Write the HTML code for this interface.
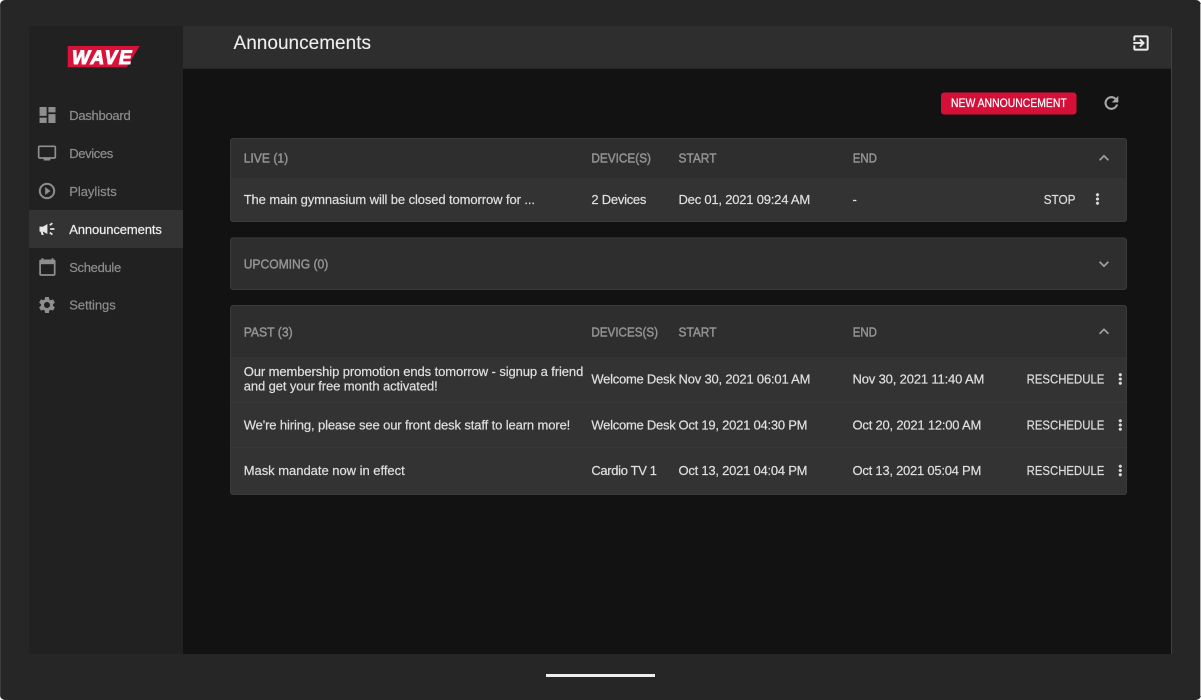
<!DOCTYPE html>
<html><head><meta charset="utf-8"><title>Announcements</title>
<style>
html,body{margin:0;padding:0;background:#fff;width:1201px;height:700px;overflow:hidden}
svg{display:block}
text{font-family:"Liberation Sans",sans-serif;font-size:13px;white-space:pre}
.n{fill:#8d8d8d;stroke:#8d8d8d;stroke-width:.2}
.h{fill:#939393;stroke:#939393;stroke-width:.45;font-size:13px}
.b{fill:#e0e0e0;stroke:#e0e0e0;stroke-width:.18}
.c{fill:#dcdcdc;stroke:#dcdcdc;stroke-width:.22;font-size:13px}
.i{fill:#8f8f8f}
.p{fill:none;stroke:#3a3a3a;stroke-width:1}
.d{fill:#dedede;stroke:#dedede;stroke-width:.6}
</style></head><body>
<svg width="1201" height="700" viewBox="0 0 1201 700" xmlns="http://www.w3.org/2000/svg">
<rect x="0" y="0" width="1201" height="700" rx="5" fill="#262626"/>
<rect x="0" y="4" width="1" height="692" fill="#3c3c3c"/>
<rect x="1200" y="4" width="1" height="692" fill="#b0b0b0"/>
<rect x="29" y="26" width="154" height="628" fill="#212121"/>
<rect x="183" y="68" width="988" height="586" fill="#121212"/>
<path d="M183 26H1168a3 3 0 0 1 3 3V68H183z" fill="#2e2e2e"/>
<rect x="183" y="68" width="988" height="1" fill="#262626"/>
<rect x="1171" y="28" width="1" height="626" fill="#404040"/>

<!-- logo -->
<polygon points="67.7,46 139.7,46 126.7,67.3 67.7,67.3" fill="#d9123a"/>
<text x="72" y="64" textLength="59.5" font-style="italic" font-weight="bold" style="font-size:19px;fill:#fff;stroke:#fff;stroke-width:1">WAVE</text>

<!-- nav -->
<rect x="29" y="210" width="154" height="38" fill="#333333"/>
<text class="n" x="69.2" y="120" textLength="61.5">Dashboard</text>
<text class="n" x="69.2" y="158" textLength="44">Devices</text>
<text class="n" x="69.2" y="196" textLength="47.5">Playlists</text>
<text x="69.2" y="234" textLength="92.7" style="fill:#eee;stroke:#eee;stroke-width:.2">Announcements</text>
<text class="n" x="69.2" y="272" textLength="52">Schedule</text>
<text class="n" x="69.2" y="309.7" textLength="46.5">Settings</text>

<!-- nav icons -->
<g class="i" transform="translate(36.9 104.4) scale(.885)"><path d="M3 13h8V3H3v10zm0 8h8v-6H3v6zm10 0h8V11h-8v10zm0-18v6h8V3h-8z"/></g>
<g class="i" transform="translate(37 143) scale(.833)"><path d="M21 3H3c-1.1 0-2 .9-2 2v12c0 1.1.9 2 2 2h5v2h8v-2h5c1.1 0 1.99-.9 1.99-2L23 5c0-1.1-.9-2-2-2zm0 14H3V5h18v12z"/></g>
<g class="i" transform="translate(37.4 181.4) scale(.8)" stroke="#8f8f8f" stroke-width=".5"><path d="M10 16.5l6-4.5-6-4.5v9zM12 2C6.48 2 2 6.48 2 12s4.48 10 10 10 10-4.48 10-10S17.52 2 12 2zm0 18c-4.41 0-8-3.59-8-8s3.59-8 8-8 8 3.59 8 8-3.59 8-8 8z"/></g>
<g>
<path d="M39.5 226.6H43L47.4 224V234L43 231.6H42.8L43.8 235H41.6L40.6 231.6H39.5z" fill="#e6e6e6"/>
<path d="M49.8 225.2L52.4 223.2M50.2 229H54.4M49.8 232.6L52.4 234.6" stroke="#e6e6e6" stroke-width="1.7" fill="none"/>
</g>
<g>
<rect x="40.1" y="260.4" width="14.6" height="14.6" rx="1" fill="none" stroke="#8f8f8f" stroke-width="1.7"/>
<rect x="39.6" y="260" width="15.6" height="4.2" fill="#8f8f8f"/>
<rect x="41.6" y="258.2" width="1.8" height="2.4" fill="#8f8f8f"/>
<rect x="51.6" y="258.2" width="1.8" height="2.4" fill="#8f8f8f"/>
</g>
<g class="i" transform="translate(37 295) scale(.833)"><path d="M19.14 12.94c.04-.3.06-.61.06-.94 0-.32-.02-.64-.07-.94l2.03-1.58c.18-.14.23-.41.12-.61l-1.92-3.32c-.12-.22-.37-.29-.59-.22l-2.39.96c-.5-.38-1.03-.7-1.62-.94l-.36-2.54c-.04-.24-.24-.41-.48-.41h-3.84c-.24 0-.43.17-.47.41l-.36 2.54c-.59.24-1.13.57-1.62.94l-2.39-.96c-.22-.08-.47 0-.59.22L2.74 8.87c-.12.21-.08.47.12.61l2.03 1.58c-.05.3-.09.63-.09.94s.02.64.07.94l-2.03 1.58c-.18.14-.23.41-.12.61l1.92 3.32c.12.22.37.29.59.22l2.39-.96c.5.38 1.03.7 1.62.94l.36 2.54c.05.24.24.41.48.41h3.84c.24 0 .44-.17.47-.41l.36-2.54c.59-.24 1.13-.56 1.62-.94l2.39.96c.22.08.47 0 .59-.22l1.92-3.32c.12-.22.07-.47-.12-.61l-2.01-1.58zM12 15.6c-1.98 0-3.6-1.62-3.6-3.6s1.62-3.6 3.6-3.6 3.6 1.62 3.6 3.6-1.62 3.6-3.6 3.6z"/></g>

<!-- header -->
<text x="233.5" y="49" textLength="137.5" style="font-size:19px;fill:#eee;stroke:#eee;stroke-width:.1">Announcements</text>
<g fill="#eee" stroke="#eee" stroke-width=".4" transform="translate(1131 33) scale(.833)"><path d="M10.09 15.59L11.5 17l5-5-5-5-1.41 1.41L12.67 11H3v2h9.67l-2.58 2.59zM19 3H5c-1.11 0-2 .9-2 2v4h2V5h14v14H5v-4H3v4c0 1.1.89 2 2 2h14c1.1 0 2-.9 2-2V5c0-1.1-.9-2-2-2z"/></g>

<!-- button -->
<rect x="941" y="92.5" width="135.5" height="22" rx="3" fill="#d50f37"/>
<text x="951" y="107.2" textLength="115.7" lengthAdjust="spacingAndGlyphs" style="font-size:11.5px;fill:#fff;stroke:#fff;stroke-width:.25">NEW ANNOUNCEMENT</text>
<g fill="#a8a8a8" stroke="#a8a8a8" stroke-width=".6" transform="translate(1101.4 93) scale(.833)"><path d="M17.65 6.35C16.2 4.9 14.21 4 12 4c-4.42 0-7.99 3.58-7.99 8s3.57 8 7.99 8c3.73 0 6.84-2.55 7.73-6h-2.08c-.82 2.33-3.04 4-5.65 4-3.31 0-6-2.69-6-6s2.69-6 6-6c1.66 0 3.14.69 4.22 1.78L13 11h7V4l-2.35 2.35z"/></g>

<!-- LIVE panel -->
<rect x="230" y="138" width="897" height="84" rx="3" fill="#2e2e2e"/>
<path d="M230 178H1127V219a3 3 0 0 1-3 3H233a3 3 0 0 1-3-3z" fill="#333333"/>
<rect class="p" x="230.5" y="138.5" width="896" height="83" rx="3"/>
<text class="h" x="243.7" y="162.6" textLength="44.5" lengthAdjust="spacingAndGlyphs">LIVE (1)</text>
<text class="h" x="591.4" y="162.6" textLength="59.6" lengthAdjust="spacingAndGlyphs">DEVICE(S)</text>
<text class="h" x="678.5" y="162.6" textLength="38" lengthAdjust="spacingAndGlyphs">START</text>
<text class="h" x="852.7" y="162.6" textLength="24.3" lengthAdjust="spacingAndGlyphs">END</text>
<g fill="#a0a0a0" transform="translate(1094 148) scale(.833)"><path d="M7.41 15.41L12 10.83l4.59 4.58L18 14l-6-6-6 6z"/></g>
<text class="b" x="243.7" y="204" textLength="291.3">The main gymnasium will be closed tomorrow for ...</text>
<text class="b" x="591.4" y="204" textLength="55">2 Devices</text>
<text class="b" x="678.5" y="204" textLength="131.7">Dec 01, 2021 09:24 AM</text>
<text class="b" x="852.5" y="204">-</text>
<text class="c" x="1043.7" y="204" textLength="31.8" lengthAdjust="spacingAndGlyphs">STOP</text>
<g class="d" transform="translate(1089 190.5) scale(.708)"><path d="M12 8c1.1 0 2-.9 2-2s-.9-2-2-2-2 .9-2 2 .9 2 2 2zm0 2c-1.1 0-2 .9-2 2s.9 2 2 2 2-.9 2-2-.9-2-2-2zm0 6c-1.1 0-2 .9-2 2s.9 2 2 2 2-.9 2-2-.9-2-2-2z"/></g>

<!-- UPCOMING panel -->
<rect x="230" y="237.5" width="897" height="52.5" rx="3" fill="#2e2e2e"/>
<rect class="p" x="230.5" y="238" width="896" height="51.5" rx="3"/>
<text class="h" x="243.7" y="268.4" textLength="84.6" lengthAdjust="spacingAndGlyphs">UPCOMING (0)</text>
<g fill="#a0a0a0" transform="translate(1094 254) scale(.833)"><path d="M16.59 8.59L12 13.17 7.41 8.59 6 10l6 6 6-6z"/></g>

<!-- PAST panel -->
<rect x="230" y="305" width="897" height="190" rx="3" fill="#2e2e2e"/>
<path d="M230 357H1127V492a3 3 0 0 1-3 3H233a3 3 0 0 1-3-3z" fill="#333333"/>
<rect x="230" y="401.5" width="897" height="1" fill="#383838"/>
<rect x="230" y="447" width="897" height="1" fill="#383838"/>
<rect class="p" x="230.5" y="305.5" width="896" height="189" rx="3"/>
<text class="h" x="243.7" y="336.6" textLength="49" lengthAdjust="spacingAndGlyphs">PAST (3)</text>
<text class="h" x="591.4" y="336.6" textLength="66.6" lengthAdjust="spacingAndGlyphs">DEVICES(S)</text>
<text class="h" x="678.5" y="336.6" textLength="38" lengthAdjust="spacingAndGlyphs">START</text>
<text class="h" x="852.7" y="336.6" textLength="24.3" lengthAdjust="spacingAndGlyphs">END</text>
<g fill="#a0a0a0" transform="translate(1094 321.5) scale(.833)"><path d="M7.41 15.41L12 10.83l4.59 4.58L18 14l-6-6-6 6z"/></g>

<text class="b" x="243.7" y="376" textLength="339.6">Our membership promotion ends tomorrow - signup a friend</text>
<text class="b" x="243.7" y="390.7" textLength="194">and get your free month activated!</text>
<text class="b" x="591.4" y="383.6" textLength="84.3">Welcome Desk</text>
<text class="b" x="678.5" y="383.6" textLength="132">Nov 30, 2021 06:01 AM</text>
<text class="b" x="852.5" y="383.6" textLength="131.8">Nov 30, 2021 11:40 AM</text>
<text class="c" x="1026.6" y="383.6" textLength="77.8" lengthAdjust="spacingAndGlyphs">RESCHEDULE</text>
<g class="d" transform="translate(1111.8 370.5) scale(.708)"><path d="M12 8c1.1 0 2-.9 2-2s-.9-2-2-2-2 .9-2 2 .9 2 2 2zm0 2c-1.1 0-2 .9-2 2s.9 2 2 2 2-.9 2-2-.9-2-2-2zm0 6c-1.1 0-2 .9-2 2s.9 2 2 2 2-.9 2-2-.9-2-2-2z"/></g>

<text class="b" x="243.7" y="429.3" textLength="326.6">We're hiring, please see our front desk staff to learn more!</text>
<text class="b" x="591.4" y="429.3" textLength="84.3">Welcome Desk</text>
<text class="b" x="678.5" y="429.3" textLength="129">Oct 19, 2021 04:30 PM</text>
<text class="b" x="852.5" y="429.3" textLength="128.8">Oct 20, 2021 12:00 AM</text>
<text class="c" x="1026.6" y="429.3" textLength="77.8" lengthAdjust="spacingAndGlyphs">RESCHEDULE</text>
<g class="d" transform="translate(1111.8 416.5) scale(.708)"><path d="M12 8c1.1 0 2-.9 2-2s-.9-2-2-2-2 .9-2 2 .9 2 2 2zm0 2c-1.1 0-2 .9-2 2s.9 2 2 2 2-.9 2-2-.9-2-2-2zm0 6c-1.1 0-2 .9-2 2s.9 2 2 2 2-.9 2-2-.9-2-2-2z"/></g>

<text class="b" x="243.7" y="475" textLength="161">Mask mandate now in effect</text>
<text class="b" x="591.4" y="475" textLength="65.6">Cardio TV 1</text>
<text class="b" x="678.5" y="475" textLength="129">Oct 13, 2021 04:04 PM</text>
<text class="b" x="852.5" y="475" textLength="128.8">Oct 13, 2021 05:04 PM</text>
<text class="c" x="1026.6" y="475" textLength="77.8" lengthAdjust="spacingAndGlyphs">RESCHEDULE</text>
<g class="d" transform="translate(1111.8 462) scale(.708)"><path d="M12 8c1.1 0 2-.9 2-2s-.9-2-2-2-2 .9-2 2 .9 2 2 2zm0 2c-1.1 0-2 .9-2 2s.9 2 2 2 2-.9 2-2-.9-2-2-2zm0 6c-1.1 0-2 .9-2 2s.9 2 2 2 2-.9 2-2-.9-2-2-2z"/></g>

<!-- home indicator -->
<rect x="546" y="674" width="109" height="3" fill="#eeeeee"/>
</svg>
</body></html>
